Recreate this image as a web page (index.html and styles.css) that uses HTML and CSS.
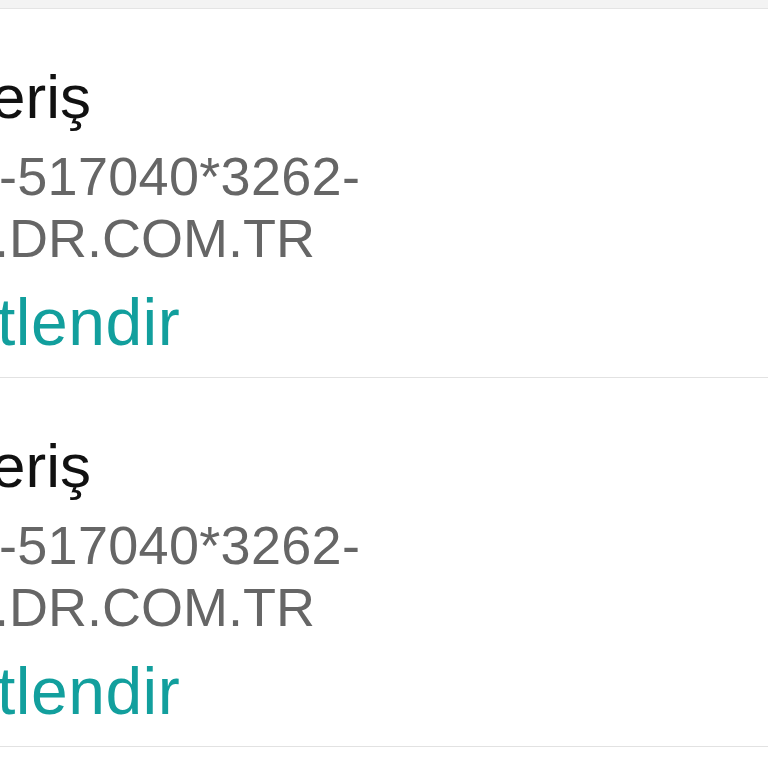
FILE: index.html
```html
<!DOCTYPE html>
<html lang="tr">
<head>
    <meta charset="UTF-8">
    <meta name="viewport" content="width=device-width, initial-scale=1.0">
    <link rel="stylesheet" href="styles.css">
    <title>Alışveriş</title>
</head>
<body>
    <div class="top-bar"></div>
    <ul class="order-list">
        <li class="order-item">
            <div class="order-title">eriş</div>
            <div class="order-code">-517040*3262-</div>
            <div class="order-code shop">.DR.COM.TR</div>
            <div class="order-action">tlendir</div>
        </li>
        <li class="order-item">
            <div class="order-title">eriş</div>
            <div class="order-code">-517040*3262-</div>
            <div class="order-code shop">.DR.COM.TR</div>
            <div class="order-action">tlendir</div>
        </li>
    </ul>
</body>
</html>
```

FILE: styles.css
```css
body {
    margin: 0px;
    padding: 0px;
    font-family: "Liberation Sans", Arial, Helvetica, sans-serif;
    background-color: #ffffff;
    overflow: hidden;
}

.top-bar {
    height: 8px;
    background-color: #f3f3f3;
    border-bottom: 1px solid #e4e4e4;
}

.order-list {
    list-style: none;
    margin: 0px;
    padding: 0px;
}

.order-item {
    height: 369px;
    box-sizing: border-box;
    padding-top: 56px;
    border-bottom: 1px solid #e2e2e2;
    overflow: hidden;
}

.order-title {
    font-size: 62px;
    line-height: 64px;
    color: #111111;
    margin-left: -9px;
    margin-bottom: 16px;
}

.order-code {
    font-size: 54px;
    line-height: 62px;
    letter-spacing: 0.3px;
    color: #666666;
    margin-left: -1px;
}

.order-code.shop {
    letter-spacing: 0px;
    margin-left: -6px;
}

.order-action {
    font-size: 66px;
    line-height: 70px;
    letter-spacing: 0.5px;
    color: #129f9d;
    margin-top: 18px;
    margin-left: -3px;
}
```
